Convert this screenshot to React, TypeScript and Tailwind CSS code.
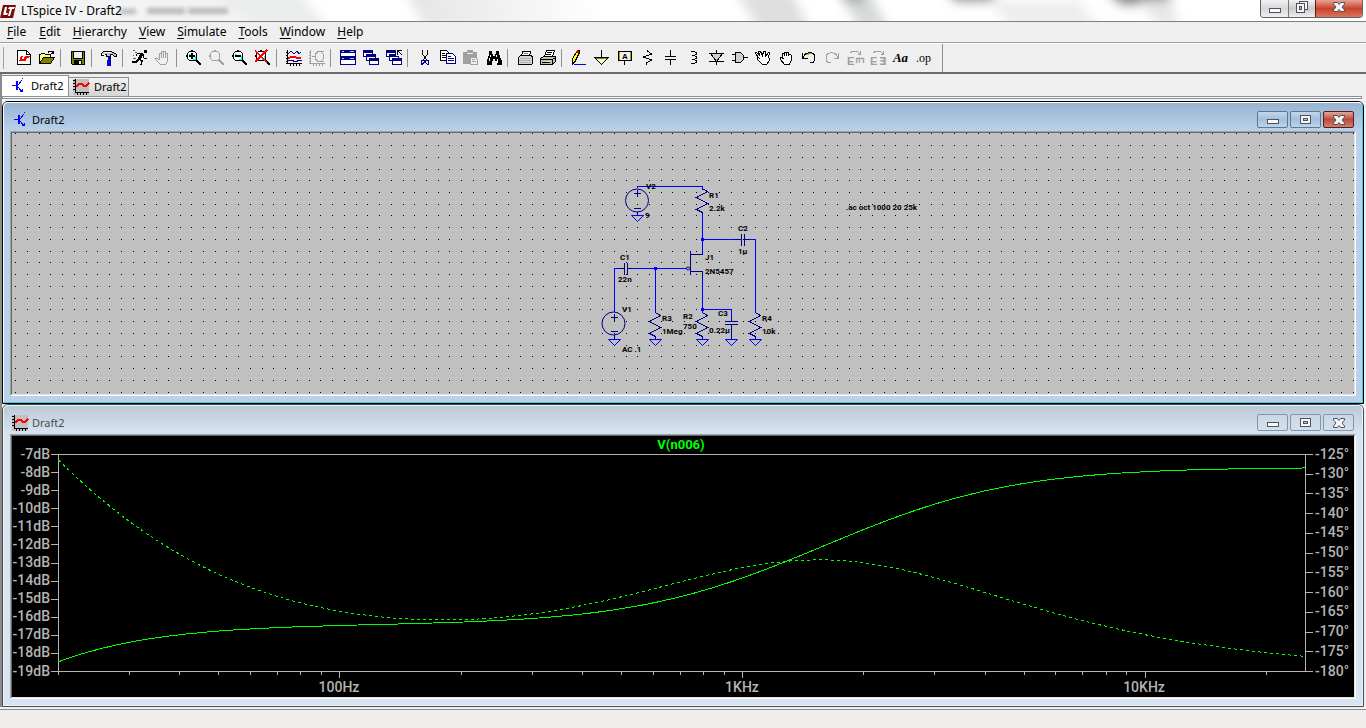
import type { ReactNode } from 'react';

type StrokeProps = { d: string; c?: string; f?: string; w?: number };

function S({ d, c = '#000', f = 'none', w = 1 }: StrokeProps) {
  return <path d={d} stroke={c} fill={f} strokeWidth={w} />;
}

function Icon({ children }: { children: ReactNode }) {
  return (
    <svg className="overflow-visible" width="16" height="16" viewBox="0 0 16 16" fill="none" shapeRendering="crispEdges" aria-hidden="true">
      {children}
    </svg>
  );
}

const NAVY = '#000080';
const GRAY = '#a0a0a0';

function Lens({ gray, mark }: { gray?: boolean; mark?: string }) {
  const line = gray ? GRAY : '#000';
  return (
    <>
      <circle cx="6" cy="6" r="5" stroke={line} fill={gray ? '#efefef' : '#fff'} strokeWidth="1.2" />
      {!gray && <S d="M3 4.5h2M7 9.5h3M9.5 6v3" c="#00ffff" />}
      <S d="M10 10l5 5" c={line} w={2} />
      {mark && <S d={mark} c={gray ? GRAY : '#000'} w={2} />}
    </>
  );
}

function TransistorIcon() {
  return (
    <Icon>
      <S d="M2 7.5h4M8 7l4-5M8 9l4 5M12 1l1-1" c="#0000ff" />
      <S d="M7 3v9" c="#0000ff" w={2} />
      <S d="M9 14h4v-4z" c="none" f="#0000ff" />
    </Icon>
  );
}

function WaveIcon() {
  return (
    <Icon>
      <rect width="16" height="16" fill="#c0c0c0" />
      <S d="M2.5 0v14M2 13.5h14M0 1.5h2M0 4.5h2M0 7.5h2M0 10.5h2M4.5 14v2M7.5 14v2M10.5 14v2M13.5 14v2" />
      <S d="M3 8l3-3h3l2 2h2l3-3" c="#ff0000" w={2} />
    </Icon>
  );
}

type Tool = { name: string; icon: ReactNode; off?: boolean };

const windowStack = (
  <>
    <S d="M.5.5h9v6h-9zM3.5 4.5h9v6h-9zM6.5 8.5h9v6h-9z" c={NAVY} f="#fff" />
    <S d="M0 1.5h10M3 5.5h10M6 9.5h10" c={NAVY} w={3} />
  </>
);

const toolGroups: Tool[][] = [
  [
    {
      name: 'New Schematic',
      icon: (
        <>
          <S d="M1.5.5h9l4 4v10h-13z" f="#fff" />
          <S d="M10.5.5v4h4" />
          <S d="M3 11l2-5h2l-1 3h2l1-3h5l-1 2h-2l-1 3z" c="none" f="#ff0000" />
        </>
      ),
    },
    {
      name: 'Open',
      icon: (
        <>
          <S d="M.5 13.5v-9h1l1-1h3l1 1h5v3" f="#ffff80" />
          <S d="M.5 13.5l4-6h11l-4 6z" f="#808000" />
          <S d="M9 2.5l1-1h3l1 2M12 3.5h3M14.5 1v3" />
        </>
      ),
    },
  ],
  [
    {
      name: 'Save',
      icon: (
        <>
          <S d="M1.5 1.5h13v13h-12l-1-1z" f="#808000" />
          <rect x="4" y="2" width="8" height="6" fill="#efefef" />
          <rect x="4" y="10" width="8" height="5" fill="#000" />
          <rect x="9" y="11" width="2" height="3" fill="#efefef" />
          <S d="M3.5 2v6h9v-6" />
        </>
      ),
    },
  ],
  [
    {
      name: 'Control Panel',
      icon: (
        <>
          <S d="M.5 5.5v-2l2-2h8l5 3v2h-2l-2-2h-2v2h-4v-2h-2l-1 1z" f="#c0c0c0" />
          <S d="M3 2.5h7M1 4.5h3" c="#fff" />
          <rect x="7" y="6" width="3" height="4" fill="#000080" />
          <rect x="6" y="10" width="4" height="6" fill="#0000ff" />
          <S d="M9.5 10v6" c={NAVY} />
        </>
      ),
    },
  ],
  [
    {
      name: 'Run',
      icon: (
        <>
          <rect x="12" y="0" width="3" height="3" fill="#000" />
          <S d="M5 3.5h5l2 2M5 4l-1 2M11 6l1 2h3" />
          <S d="M10 4l-3 5" w={3} />
          <S d="M7 9l3 2-1 4M7 9l-3 3H0" w={1.5} />
          <S d="M1 .5h2M3 2.5h2M1 5.5h1M1 8.5h3" c="#606060" />
        </>
      ),
    },
    {
      name: 'Halt',
      off: true,
      icon: <S d="M4.5 10V3.5h2V8M6.5 6V1.5h2V8M8.5 6V1.5h2V8M10.5 6V3.5h2v8l-2 3h-5l-5-5v-1h2l2 2" c={GRAY} />,
    },
  ],
  [
    { name: 'Zoom to rectangle', icon: <Lens mark="M3 6h6M6 3v6" /> },
    { name: 'Pan', off: true, icon: <Lens gray /> },
    { name: 'Zoom back', icon: <Lens mark="M3 6h6" /> },
    {
      name: 'Zoom full extents',
      icon: (
        <>
          <Lens />
          <S d="M0 1l12 11M12 0L0 12" c="#ff0000" w={1.5} />
        </>
      ),
    },
  ],
  [
    {
      name: 'Autorange',
      icon: (
        <>
          <S d="M1.5 0v14M0 13.5h16M0 2.5h2M0 5.5h2M0 8.5h2M0 11.5h2M4.5 14v2M7.5 14v2M10.5 14v2M13.5 14v2" />
          <S d="M2 4l3-3 3 3 3-3 2 3 2-2" c={NAVY} />
          <S d="M2 7.5h2l2-1h2l2 1h5" c="#ff0000" w={2} />
          <S d="M2 10.5h5l1 1h3l1-1h4" c={NAVY} />
        </>
      ),
    },
    {
      name: 'Pick visible traces',
      off: true,
      icon: (
        <>
          <S d="M1.5 0v14M0 13.5h16M0 2.5h2M0 5.5h2M0 8.5h2M0 11.5h2M4.5 14v2M7.5 14v2M10.5 14v2M13.5 14v2" c={GRAY} />
          <S d="M15 1.5h-6l-3 3v4l3 3h6M11.5 1.5l3 3v4l-3 3M3 6.5h3" c={GRAY} />
        </>
      ),
    },
  ],
  [
    {
      name: 'Tile windows',
      icon: (
        <>
          <S d="M.5.5h15v14H.5z" c={NAVY} f="#fff" />
          <S d="M0 1.5h16M0 8.5h16" c={NAVY} w={3} />
          <S d="M0 6.5h16" c={NAVY} />
          <S d="M2 1.5h2M10 1.5h4M2 8.5h2M10 8.5h4" c="#c0c0ff" />
        </>
      ),
    },
    { name: 'Cascade windows', icon: windowStack },
    {
      name: 'Close all windows',
      icon: (
        <>
          {windowStack}
          <rect x="10" y="0" width="6" height="6" fill="#efefef" />
          <S d="M11.5 5V.5h4M12 1l4 4" />
        </>
      ),
    },
  ],
  [
    {
      name: 'Cut',
      icon: (
        <>
          <S d="M5.5 0v4l4 6M10.5 0v4l-4 6" />
          <S d="M4 10.5h3v2l-2 2h-1v-3zM11 10.5H8.5v2l2 2h1v-3z" c={NAVY} />
        </>
      ),
    },
    {
      name: 'Copy',
      icon: (
        <>
          <S d="M.5.5h6l2 2v8h-8z" f="#fff" />
          <S d="M2 3.5h3M2 5.5h5M2 7.5h5" />
          <S d="M6.5 3.5h6l3 3v7h-9z" c={NAVY} f="#fff" />
          <S d="M8 6.5h3M8 8.5h6M8 10.5h6" c={NAVY} />
        </>
      ),
    },
    {
      name: 'Paste',
      off: true,
      icon: (
        <>
          <S d="M.5 2.5h13v11h-13z" c={GRAY} f={GRAY} />
          <rect x="4" y="0" width="6" height="4" fill={GRAY} />
          <S d="M4 3.5h6" c="#efefef" />
          <S d="M7.5 7.5h5l2 2v5h-7z" c={GRAY} f="#efefef" />
          <S d="M9 9.5h3M9 11.5h4" c={GRAY} />
        </>
      ),
    },
    {
      name: 'Find',
      icon: (
        <>
          <path d="M3 1h3v3h1v2h2V4h1V1h3v3l3 7v4h-5v-4H9V9H7v2H6v4H1v-4l2-7z" fill="#000" />
          <S d="M4.5 5v2M3.5 8v3M10.5 5v2M11.5 9v4" c="#fff" />
        </>
      ),
    },
  ],
  [
    {
      name: 'Print setup',
      icon: (
        <>
          <S d="M4.5 6.5l1-5h8l-1 5" f="#fff" />
          <S d="M1.5 7.5l2-2h11l1 2v6l-1 1h-13z" f="#d8d8d8" />
          <S d="M3 8.5h11M2 10.5h12M3 12.5h11" c="#b0b0b0" />
          <S d="M7 3.5h4" c="#808080" />
        </>
      ),
    },
    {
      name: 'Print',
      icon: (
        <>
          <S d="M4.5 6.5l2-6h8l-2 6" f="#fff" />
          <S d="M7 2.5h5M6 4.5h5" />
          <S d="M.5 8.5l3-2h12v5l-3 3h-12z" f="#c0c0c0" />
          <S d="M0 9.5h12v5M2 12.5h8M13 8.5h2" />
          <S d="M7 11.5h3" c="#ffff00" />
        </>
      ),
    },
  ],
  [
    {
      name: 'Wire',
      icon: (
        <>
          <S d="M6.5.5h2v2l-4 8-3 3v-5z" f="#ffff00" />
          <S d="M6 1l2 2" c="#ff0000" w={2} />
          <S d="M1.5 10v4l3-3" />
          <S d="M3 14.5h12" c="#0000ff" />
        </>
      ),
    },
    {
      name: 'Ground',
      icon: (
        <>
          <S d="M7.5 0v7" />
          <S d="M.5 7.5h14l-7 7z" f="#f4f4e0" />
          <S d="M2 8.5h11" c="#808000" />
        </>
      ),
    },
    {
      name: 'Label net',
      icon: (
        <>
          <S d="M1.5 1.5h13v9h-13zM7.5 11v4" f="#efefef" />
          <S d="M2.5 2v8M13.5 2v8" c="#a0a000" />
          <text x="8" y="9" textAnchor="middle" fontSize="8" fill="#000" className="font-['Liberation_Sans'] font-bold">A</text>
        </>
      ),
    },
    { name: 'Resistor', icon: <S d="M7.5 0v1l4 3-8 3 8 3-5 3v2" /> },
    { name: 'Capacitor', icon: <S d="M7.5 0v6M7.5 10v5M2 6.5h11M2 9.5h11" /> },
    { name: 'Inductor', icon: <S d="M5 1.5h3l2 1v2l-2 1H6h2l2 1v2l-2 1H6h2l2 1v2l-2 1H5" /> },
    {
      name: 'Diode',
      icon: (
        <>
          <S d="M1.5 3.5h12l-6 8z" f="#d0d0d0" />
          <S d="M7.5 0v4M7.5 11v4M0 3.5h15M0 11.5h15" />
        </>
      ),
    },
    {
      name: 'Component',
      icon: (
        <>
          <S d="M0 4.5h4M0 10.5h4M12 7.5h4" />
          <S d="M3.5 2.5h5l3 3v4l-3 3h-5z" f="#d0d0d0" />
        </>
      ),
    },
    {
      name: 'Move',
      icon: <S d="M3.5 7.5l-3-4v-1h1l3 3-1-4h2l2 4 1-4h2v5l3-4h1l-1 5 1 1v2l-3 4h-4l-5-5v-2h1l2 2" f="#fff" />,
    },
    {
      name: 'Drag',
      icon: <S d="M4.5 7.5V3.5h2V6V2.5h2V6V2.5h2V6V4.5h2l1 1v4l-2 5h-5l-4-5v-2h2l1 2" f="#fff" />,
    },
    {
      name: 'Undo',
      icon: (
        <>
          <S d="M1.5 3v5h5M2 8C4 1 14 1 14 8c0 3-2 5-5 5" />
          <S d="M5 4.5h2l1-1h3" c="#a0a000" />
        </>
      ),
    },
    {
      name: 'Redo',
      off: true,
      icon: <S d="M14.5 3v5h-5M14 8C12 1 2 1 2 8c0 3 2 5 5 5" c={GRAY} />,
    },
    {
      name: 'Rotate',
      off: true,
      icon: (
        <>
          <S d="M3 3l3-2h4l3 3M13.5 1v3h-3" c={GRAY} />
          <text x="0" y="15" fontSize="11" fill={GRAY} className="font-['Liberation_Sans'] font-bold">E</text>
          <text transform="translate(9 7) rotate(90)" fontSize="10" fill={GRAY} className="font-['Liberation_Sans'] font-bold">E</text>
        </>
      ),
    },
    {
      name: 'Mirror',
      off: true,
      icon: (
        <>
          <S d="M3 3l3-2h4l3 3M13.5 1v3h-3" c={GRAY} />
          <text x="0" y="15" fontSize="11" fill={GRAY} className="font-['Liberation_Sans'] font-bold">E</text>
          <text x="9" y="15" fontSize="11" fill={GRAY} className="font-['DejaVu_Sans'] font-bold">Ǝ</text>
        </>
      ),
    },
  ],
];

const menus = ['File', 'Edit', 'Hierarchy', 'View', 'Simulate', 'Tools', 'Window', 'Help'];

function TitleBar() {
  return (
    <header className="relative h-[22px] border-b border-[#7f7f7f] overflow-hidden bg-white flex items-start justify-between">
      <svg className="absolute inset-0 w-full h-full" viewBox="0 0 1366 21" preserveAspectRatio="none" aria-hidden="true">
        <defs>
          <filter id="soft" x="-20%" y="-200%" width="140%" height="500%">
            <feGaussianBlur stdDeviation="6" />
          </filter>
          <filter id="ghost" x="-20%" y="-100%" width="140%" height="300%">
            <feGaussianBlur stdDeviation="2" />
          </filter>
          <linearGradient id="veil" x1="0" x2="1">
            <stop offset="0" stopColor="#e4e4e4" />
            <stop offset="1" stopColor="#ffffff" />
          </linearGradient>
        </defs>
        <g filter="url(#soft)">
          <path d="M-20-10h320l30 40H-20z" fill="#f3f3f3" />
          <path d="M200-10h90l40 40h-60z" fill="#e9edeb" />
          <path d="M405-10h180l20 40H425z" fill="url(#veil)" />
          <path d="M735-10h55l20 40h-50z" fill="#dedede" />
          <path d="M835-14h30l25 44h-30z" fill="#d6dad9" />
          <path d="M840-14h25v16h-20z" fill="#9aa3a1" />
          <path d="M945-14h50v15h-40z" fill="#87908c" />
          <path d="M990 0h90l20 30h-90z" fill="#eeeeee" />
          <path d="M1105-14h65v18h-50z" fill="#7b827f" />
          <path d="M1140 0h30l10 24h-24z" fill="#e6e6e6" />
        </g>
        <g filter="url(#ghost)" fill="#b8b8b8">
          <rect x="120" y="9" width="16" height="5" />
          <rect x="147" y="8" width="38" height="6" />
          <rect x="188" y="8" width="40" height="6" />
        </g>
      </svg>
      <div className="relative flex items-center gap-1 h-[21px]">
        <svg width="16" height="16" viewBox="0 0 16 16" aria-hidden="true">
          <path d="M3 2h13l-3 13H0z" fill="#7c0a0a" />
          <path d="M5 4l-2 8h4l1-2H6l1-6zM9 4l-1 2h2l-2 7h2l2-7h2l1-2z" fill="#fff" />
        </svg>
        <h1 className="text-xs font-normal text-black whitespace-nowrap pl-px">LTspice IV - Draft2</h1>
      </div>
      <div className="relative flex h-[18px] mr-[3px] rounded-b border border-t-0 border-[#5f6368] overflow-hidden">
        <button aria-label="Minimize" className="w-[27px] flex items-end justify-center pb-1 bg-gradient-to-b from-[#f3f3f3] via-[#d8d8da] to-[#efeff2]">
          <MinGlyph />
        </button>
        <button aria-label="Restore" className="w-[27px] flex items-center justify-center pb-1 border-l border-[#777] bg-gradient-to-b from-[#f3f3f3] via-[#c9c9cc] to-[#efeff2]">
          <svg width="12" height="12" viewBox="0 0 12 12" shapeRendering="crispEdges" aria-hidden="true">
            <path d="M3.5.5h8v8h-8z" fill="#f4f4f4" stroke="#4e5263" />
            <path d="M.5 2.5h8v9h-8z" fill="#f4f4f4" stroke="#4e5263" />
            <path d="M3.5 5.5h2v3h-2z" fill="#bbb" stroke="#4e5263" />
          </svg>
        </button>
        <button aria-label="Close" className="w-[47px] flex items-center justify-center pb-1 border-l border-[#5a1c14] bg-gradient-to-b from-[#e6a394] via-[#c8412a] to-[#d8745c]">
          <CloseGlyph />
        </button>
      </div>
    </header>
  );
}

function MinGlyph() {
  return (
    <svg width="12" height="5" viewBox="0 0 12 5" shapeRendering="crispEdges" aria-hidden="true">
      <path d="M.5.5h11v4H.5z" fill="#fafafa" stroke="#4e5263" />
    </svg>
  );
}

function CloseGlyph() {
  return (
    <svg width="12" height="10" viewBox="0 0 12 10" aria-hidden="true">
      <path d="M.5.5h4L6 2.5 7.500.5h4V2L9 5l2.500 3v1.500h-4L6 7.500 4.500 9.500h-4V8L3 5 .5 2z" fill="#f6f6f6" stroke="#4e5263" />
    </svg>
  );
}

function MenuBar() {
  return (
    <nav className="h-[21px] flex items-center border-b border-[#a0a0a0] text-xs">
      {menus.map((menu) => (
        <button key={menu} className="px-[6px] leading-5 first:px-[7px]">
          <span className="underline underline-offset-2">{menu[0]}</span>
          {menu.slice(1)}
        </button>
      ))}
    </nav>
  );
}

function ToolBar() {
  return (
    <div className="h-[31px] flex border-t border-t-white border-b-2 border-b-[#6b6b6b]">
      <div className="flex items-center border-r border-[#909090]">
        <span className="w-[3px] h-[22px] ml-px mr-2 border-r border-[#a0a0a0]" />
        {toolGroups.map((group, i) => (
          <div key={i} className="flex items-center">
            {i > 0 && <span className="w-px h-[18px] ml-[2px] mr-[5px] bg-[#909090]" />}
            {group.map((tool) => (
              <button key={tool.name} aria-label={tool.name} disabled={tool.off} className="w-[23px] h-[22px] flex items-center justify-center">
                <Icon>{tool.icon}</Icon>
              </button>
            ))}
          </div>
        ))}
        <button className="w-[23px] text-[13px] leading-4 font-bold italic font-['Liberation_Serif',serif]">Aa</button>
        <button className="w-[23px] mr-[7px] text-xs leading-4 font-['Liberation_Serif',serif]">.op</button>
      </div>
    </div>
  );
}

function DocumentTabs() {
  return (
    <div className="pt-px">
      <div className="flex items-end text-[11px] leading-4">
        <button className="h-[21px] w-[67px] flex items-center gap-[5px] pl-2 bg-white border-t border-r border-[#8b8e96]">
          <TransistorIcon />
          Draft2
        </button>
        <button className="h-[19px] w-[60px] flex items-center gap-[5px] pl-1 border-t border-r border-[#8b8e96] bg-gradient-to-b from-[#f2f2f2] to-[#d4d4d4]">
          <WaveIcon />
          Draft2
        </button>
      </div>
      <div className="h-[3px] mr-[2px] border border-[#8b8e96] bg-white" />
      <div className="h-[2px] bg-[#f4f4f4]" />
    </div>
  );
}

const childButton = 'w-[31px] h-[17px] flex items-center justify-center rounded-xs border';

function ChildWindow({ icon, active, children }: { icon: ReactNode; active?: boolean; children: ReactNode }) {
  const plain = active
    ? 'border-[#5d7893] bg-gradient-to-b from-[#c3d6ea] via-[#a3bfdd] to-[#bcd3ec]'
    : 'border-[#8395aa] bg-gradient-to-b from-[#cad7e4] to-[#d2dfed]';
  const close = active ? 'border-[#5b1a1c] bg-gradient-to-b from-[#e2a79c] via-[#bb4a38] to-[#cf7f6c]' : plain;
  return (
    <section className={`rounded-t-md border ${active ? 'border-black' : 'border-[#4b4b4b]'}`}>
      <div
        className={`rounded-t-[5px] border px-[6px] pb-[6px] ${
          active
            ? 'border-white border-b-[#35cfe6] border-r-[#35cfe6] bg-[linear-gradient(#98b4d2,#b9d1ea_28px)]'
            : 'border-[#eef3f8] bg-[linear-gradient(#bccad8,#d7e4f2_28px)]'
        }`}
      >
        <header className="h-7 flex items-center justify-between">
          <div className={`flex items-center gap-1 pl-[2px] pt-[5px] text-[11px] ${active ? 'text-black' : 'text-[#4c4c4c]'}`}>
            {icon}
            <h2 className="leading-4">Draft2</h2>
          </div>
          <div className="flex gap-[2px] pr-[2px] pt-[5px]">
            <button aria-label="Minimize" className={`${childButton} ${plain} pt-[3px]`}>
              <MinGlyph />
            </button>
            <button aria-label="Maximize" className={`${childButton} ${plain}`}>
              <svg width="11" height="9" viewBox="0 0 11 9" shapeRendering="crispEdges" aria-hidden="true">
                <path d="M.5.5h10v8H.5z" fill="#f6f6f6" stroke="#4e5263" />
                <path d="M3.5 3.5h4v2h-4z" fill="#a9c3df" stroke="#4e5263" />
              </svg>
            </button>
            <button aria-label="Close" className={`${childButton} ${close}`}>
              <CloseGlyph />
            </button>
          </div>
        </header>
        <div className="border border-t-[#a0a0a0] border-l-[#a0a0a0] border-b-white border-r-white">
          <div className="border border-t-[#696969] border-l-[#696969] border-b-[#e3e3e3] border-r-[#e3e3e3] overflow-hidden">{children}</div>
        </div>
      </div>
    </section>
  );
}

// grid dots of the schematic sheet
const PITCH = 11.737;
const gridDots = Array.from({ length: 23 }, (_, row) =>
  Array.from({ length: 115 }, (_, col) => `M${Math.round(15.2 + col * PITCH)} ${Math.round(133.3 + row * PITCH)}.5h1`).join('')
).join('');

const ground = (x: number, y: number) => `M${x - 6} ${y}h12l-6 6z`;
const zigzag = (x: number, y: number) => `M${x} ${y}v1l5 3-11 6 11 6-11 6 6 3v3`;

const wires = [
  'M637.5 188v-1.5h65v3',
  'M702.5 214v40',
  'M702.5 239.5h31M750 239.5h5.5V312',
  'M614.5 312V268.5h5M632 268.5h55',
  'M655.5 268.5V312',
  'M702.5 278v34M702.5 309.5h29V318',
].join('');

const symbols = [
  zigzag(702.5, 187.5),
  zigzag(655.5, 311.5),
  zigzag(702.5, 311.5),
  zigzag(755.5, 311.5),
  'M733 239.5h8M741.5 234v12M744.5 234v12M745 239.5h6',
  'M619 268.5h6M624.5 263v12M627.5 263v12M628 268.5h9',
  'M731.5 318v3M725 321.5h13M725 324.5h13M731.5 325v14',
  'M690.5 251v24M702.5 254.5h-12M690.5 271.5h12v8',
  'M634 193.5h7M637.5 190v7M634 208.5h7M637.5 212v4',
  'M611 317.5h7M614.5 314v7M611 331.5h7M614.5 335v4',
].join('');

const grounds = [ground(637.5, 215.5), ground(614.5, 339.5), ground(655.5, 339.5), ground(702.5, 339.5), ground(731.5, 339.5), ground(755.5, 339.5)].join('');

const partLabels: [number, number, string][] = [
  [646, 189, 'V2'],
  [645, 218, '9'],
  [709, 198, 'R1'],
  [709, 211, '2.2k'],
  [738, 231, 'C2'],
  [738, 254, '1µ'],
  [620, 260, 'C1'],
  [618, 282, '22n'],
  [705, 260, 'J1'],
  [705, 274, '2N5457'],
  [622, 312, 'V1'],
  [622, 352, 'AC .1'],
  [662, 321, 'R3'],
  [662, 334, '1Meg'],
  [683, 319, 'R2'],
  [683, 329, '750'],
  [718, 316, 'C3'],
  [709, 333, '0.22µ'],
  [762, 321, 'R4'],
  [762, 334, '10k'],
  [846, 210, '.ac oct 1000 20 25k'],
];

function Schematic() {
  return (
    <div className="bg-[#c0c0c0]">
      <svg className="block w-full" viewBox="12 133 1342 261" fill="none" role="img" aria-label="JFET amplifier schematic">
        <g shapeRendering="crispEdges">
          <path d={gridDots} stroke="#000" />
          <path d={symbols} stroke="#000080" />
          <path d={wires} stroke="#0000ff" />
        </g>
        <path d={grounds} stroke="#0000ff" />
        <circle cx="637" cy="200.5" r="11.5" stroke="#000080" />
        <circle cx="613.5" cy="323.5" r="11.5" stroke="#000080" />
        <circle cx="688" cy="268.5" r="1.5" stroke="#000080" />
        <path d="M701 238h3v3h-3zM654 267h3v3h-3zM701 308h3v3h-3z" fill="#0000ff" />
        <g fill="#000" fontSize="8" className="font-['Roboto',sans-serif] font-bold">
          {partLabels.map(([x, y, label]) => (
            <text key={label} x={x} y={y}>
              {label}
            </text>
          ))}
        </g>
      </svg>
    </div>
  );
}

const PLOT = { left: 58.5, right: 1305.5, top: 454.5, bottom: 671.5 };
const F_MIN = 20;
const F_MAX = 25000;

const freqToX = (f: number) => PLOT.left + ((PLOT.right - PLOT.left) * Math.log10(f / F_MIN)) / Math.log10(F_MAX / F_MIN);
const dbToY = (db: number) => PLOT.top + ((PLOT.bottom - PLOT.top) * (-7 - db)) / 12;
const degToY = (deg: number) => PLOT.top + ((PLOT.bottom - PLOT.top) * (-125 - deg)) / 55;

// output coupling, input coupling, source bypass zero and pole (Hz)
const F_OUT = 13;
const F_IN = 7.2;
const F_ZERO = 965;
const F_POLE = 2627;

const gainDb = (f: number) =>
  -16.4 - 10 * Math.log10(1 + (F_OUT / f) ** 2) - 10 * Math.log10(1 + (F_IN / f) ** 2) + 10 * Math.log10(1 + (f / F_ZERO) ** 2) - 10 * Math.log10(1 + (f / F_POLE) ** 2);

const phaseDeg = (f: number) =>
  -180 + ((Math.atan(F_OUT / f) + Math.atan(F_IN / f) + Math.atan(f / F_ZERO) - Math.atan(f / F_POLE)) * 180) / Math.PI;

const STEPS = 400;
const trace = (toY: (f: number) => number) =>
  Array.from({ length: STEPS + 1 }, (_, i) => {
    const f = F_MIN * (F_MAX / F_MIN) ** (i / STEPS);
    return `${freqToX(f).toFixed(1)},${toY(f).toFixed(1)}`;
  }).join(' ');

const decades = [100, 1000, 10000];
const minorFreqs = [10, 100, 1000, 10000].flatMap((d) => [1, 2, 3, 4, 5, 6, 7, 8, 9].map((n) => n * d)).filter((f) => f >= F_MIN && f <= F_MAX);

function Waveform() {
  return (
    <div className="bg-black">
      <svg className="block w-full" viewBox="12 436 1342 261" fill="none" role="img" aria-label="Frequency response of V(n006)">
        <g stroke="#b4b4b4" shapeRendering="crispEdges">
          <path d={`M${PLOT.left} ${PLOT.top}H${PLOT.right}V${PLOT.bottom}H${PLOT.left}z`} />
          {minorFreqs.map((f) => (
            <path key={f} d={`M${Math.floor(freqToX(f)) + 0.5} 672v${decades.includes(f) ? 6 : 3}`} />
          ))}
          {Array.from({ length: 13 }, (_, i) => (
            <path key={i} d={`M51 ${Math.floor(dbToY(-7 - i)) + 0.5}h8`} />
          ))}
          {Array.from({ length: 12 }, (_, i) => (
            <path key={i} d={`M1305 ${Math.floor(degToY(-125 - i * 5)) + 0.5}h8`} />
          ))}
        </g>
        <g stroke="#00ff00" shapeRendering="crispEdges">
          <polyline points={trace((f) => dbToY(gainDb(f)))} />
          <polyline points={trace((f) => degToY(phaseDeg(f)))} strokeDasharray="3 3" />
        </g>
        <g fill="#b4b4b4" fontSize="14" className="font-['Roboto',sans-serif] font-medium">
          {Array.from({ length: 13 }, (_, i) => (
            <text key={i} x="50" y={Math.round(dbToY(-7 - i)) + 4} textAnchor="end">
              {`${-7 - i}dB`}
            </text>
          ))}
          {Array.from({ length: 12 }, (_, i) => (
            <text key={i} x="1315" y={Math.round(degToY(-125 - i * 5)) + 4}>
              {`${-125 - i * 5}°`}
            </text>
          ))}
          {decades.map((f) => (
            <text key={f} x={Math.round(freqToX(f)) - 1} y="692" textAnchor="middle">
              {f < 1000 ? `${f}Hz` : `${f / 1000}KHz`}
            </text>
          ))}
        </g>
        <text x="681" y="449" textAnchor="middle" fontSize="13" fill="#00ff00" className="font-['Roboto',sans-serif] font-bold">
          V(n006)
        </text>
      </svg>
    </div>
  );
}

export default function App() {
  return (
    <div className="min-h-screen flex flex-col bg-[#efefef] text-black font-['Noto_Sans',sans-serif]">
      <TitleBar />
      <MenuBar />
      <ToolBar />
      <main className="border-l-2 border-[#8c8c8c] pr-[2px]">
        <DocumentTabs />
        <ChildWindow active icon={<TransistorIcon />}>
          <Schematic />
        </ChildWindow>
        <ChildWindow icon={<WaveIcon />}>
          <Waveform />
        </ChildWindow>
      </main>
      <footer className="mt-[2px] flex-1 min-h-[18px] border-t border-[#8c8c8c] bg-[#f0edec]" />
    </div>
  );
}
